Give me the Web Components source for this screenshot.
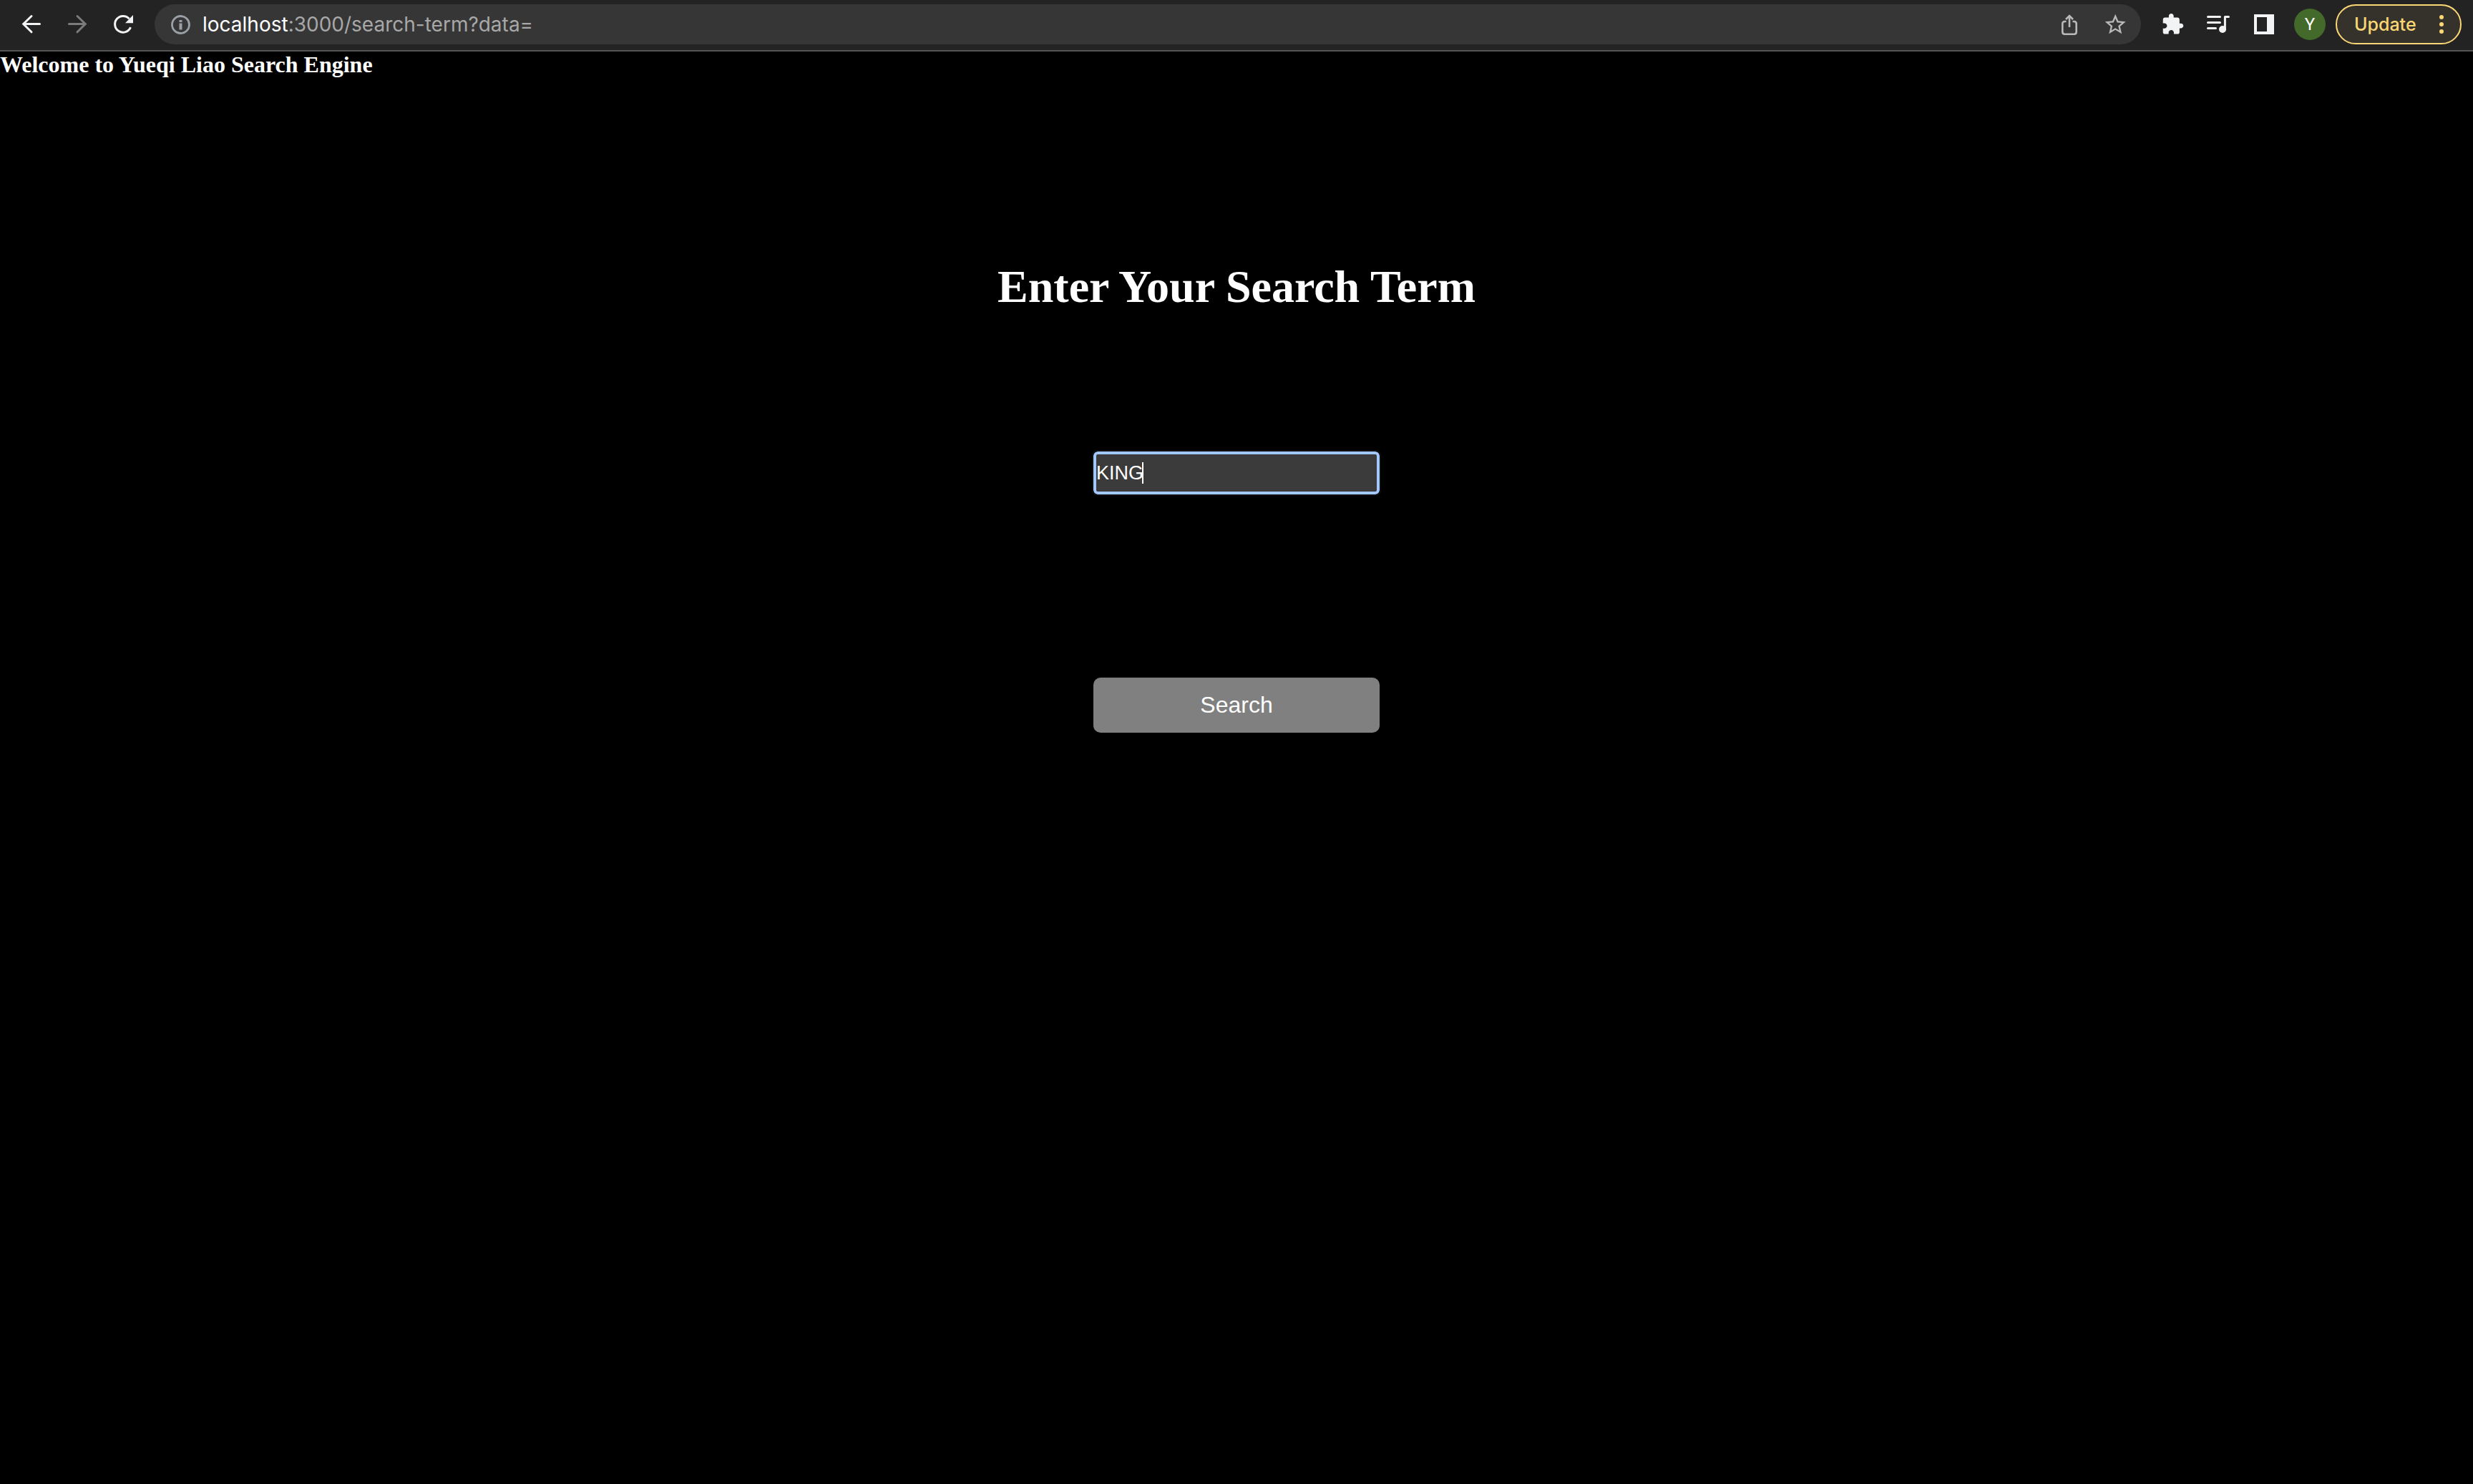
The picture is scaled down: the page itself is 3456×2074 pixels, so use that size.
<!DOCTYPE html>
<html lang="en">
<head>
<meta charset="utf-8">
<title>Search Term</title>
<style>
  body { margin: 0; background: #000; color: #fff; font-family: "Liberation Serif", "Times New Roman", serif; }
</style>
</head>
<body>
<browser-toolbar></browser-toolbar>
<search-page>
  <span slot="welcome">Welcome to Yueqi Liao Search Engine</span>
  <span slot="title">Enter Your Search Term</span>
</search-page>

<template id="toolbar-template">
  <style>
    :host { display: flex; align-items: center; gap: 8px; box-sizing: border-box; height: 72px; padding: 6px 16px 8px; background: #232323; border-bottom: 2px solid #545454; font-family: Inter, "Open Sans", sans-serif; color: #f1f3f4; }
    .address { flex: 1; display: flex; align-items: center; gap: 8px; height: 56px; margin: 0 8px; padding: 0 8px 0 22px; border-radius: 28px; background: #363636; box-sizing: border-box; }
    .url { flex: 1; padding-left: 8px; font-size: 28px; line-height: 56px; color: #a8a8a8; white-space: nowrap; }
    .url b { font-weight: 400; color: #fff; }
    .avatar-slot { display: flex; justify-content: center; width: 56px; }
    .avatar { width: 44px; height: 44px; padding: 0; border: 0; border-radius: 50%; background: #43692b; color: #fff; font: 24px/44px Roboto, sans-serif; }
    .update { display: flex; align-items: center; justify-content: space-between; box-sizing: border-box; width: 176px; height: 56px; padding: 0 22px 0 24px; border: 2px solid #fbd775; border-radius: 28px; background: #35322b; color: #fbd775; font: 500 25px/52px Inter, sans-serif; }
    .update svg { display: block; }
  </style>
  <tool-button label="Back"><svg width="56" height="56" fill="none" stroke="#f1f3f4" stroke-width="3" stroke-linecap="round"><path d="M39.500 27.500H17M28 16.500L16.700 27.500 28 38.800"/></svg></tool-button>
  <tool-button label="Forward"><svg width="56" height="56" fill="none" stroke="#7b7b7b" stroke-width="3" stroke-linecap="round"><path d="M16.500 27.500H39M28 16.500L39.300 27.500 28 38.800"/></svg></tool-button>
  <tool-button label="Reload"><svg width="56" height="56"><path d="M38.500 32.200A11.400 11.400 0 1 1 36.500 20.200" fill="none" stroke="#f1f3f4" stroke-width="3"/><path d="M42 15V26.300H31Z" fill="#f1f3f4"/></svg></tool-button>
  <div class="address">
    <svg width="29" height="29" viewBox="0 0 29 29"><circle cx="14.500" cy="14.500" r="12" fill="none" stroke="#9aa0a6" stroke-width="2.800"/><path d="M12.500 8h4v3h-4zM12.500 12.500h4v9h-4z" fill="#9aa0a6"/></svg>
    <div class="url"><b>localhost</b>:3000/search-term?data=</div>
    <tool-button label="Share"><svg width="56" height="56" fill="none" stroke="#b9b9b9" stroke-width="2.600"><path d="M23.500 24H21.500Q18.300 24 18.300 27.200V38.500Q18.300 41.700 21.500 41.700H34.500Q37.700 41.700 37.700 38.500V27.200Q37.700 24 34.500 24H32.500M28 32V16.500M23 21L28 16 33 21"/></svg></tool-button>
    <tool-button label="Bookmark"><svg width="56" height="56" fill="#b9b9b9"><path transform="translate(10.800 10.800) scale(1.450)" d="M22 9.240l-7.190-.620L12 2 9.190 8.630 2 9.240l5.460 4.730L5.820 21 12 17.270 18.180 21l-1.630-7.030L22 9.240zM12 15.400l-3.760 2.270 1-4.280-3.320-2.880 4.380-.380L12 6.100l1.710 4.040 4.380.380-3.320 2.880 1 4.280L12 15.400z"/></svg></tool-button>
  </div>
  <tool-button label="Extensions"><svg width="56" height="56" fill="#f1f3f4"><path transform="translate(12 11.700) scale(1.360)" d="M20.500 11H19V7c0-1.100-.9-2-2-2h-4V3.500C13 2.120 11.880 1 10.500 1S8 2.120 8 3.500V5H4c-1.100 0-1.990.9-1.990 2v3.800H3.500c1.490 0 2.700 1.210 2.700 2.700s-1.210 2.700-2.700 2.700H2V20c0 1.100.9 2 2 2h3.800v-1.500c0-1.490 1.210-2.700 2.700-2.700 1.490 0 2.700 1.210 2.700 2.700V22H17c1.100 0 2-.9 2-2v-4h1.500c1.380 0 2.500-1.120 2.500-2.500S21.880 11 20.500 11z"/></svg></tool-button>
  <tool-button label="Media controls"><svg width="56" height="56" fill="#f1f3f4"><path d="M13.500 17.500H30.500M13.500 25.500H30.500M13.500 33.500H24.500" stroke="#f1f3f4" stroke-width="3" stroke-linecap="round"/><path d="M37.400 35V17.500H42.500" fill="none" stroke="#f1f3f4" stroke-width="3" stroke-linecap="round" stroke-linejoin="round"/><circle cx="34" cy="35" r="5"/></svg></tool-button>
  <tool-button label="Side panel"><svg width="56" height="56"><path fill="#f1f3f4" fill-rule="evenodd" d="M14 14H42V42H14ZM18 18V38H32V18Z"/></svg></tool-button>
  <div class="avatar-slot"><button class="avatar" type="button">Y</button></div>
  <button class="update" type="button"><span>Update</span><svg width="8" height="28" fill="#fbd775"><circle cx="4" cy="4" r="3"/><circle cx="4" cy="14" r="3"/><circle cx="4" cy="24" r="3"/></svg></button>
</template>

<template id="tool-button-template">
  <style>
    :host { display: block; flex: none; }
    button { display: block; width: 56px; height: 56px; padding: 0; border: 0; background: none; }
    ::slotted(svg) { display: block; }
  </style>
  <button type="button"><slot></slot></button>
</template>

<template id="page-template">
  <style>
    :host { display: block; }
    h1, h2 { margin: 0; font-weight: 700; }
    h2 { font-size: 32px; line-height: 36px; }
    main { display: flex; flex-direction: column; align-items: center; padding-top: 256px; }
    h1 { font-size: 64px; line-height: 74px; text-align: center; }
    search-form { margin-top: 193px; }
  </style>
  <h2><slot name="welcome"></slot></h2>
  <main>
    <h1 id="title"><slot name="title"></slot></h1>
    <search-form></search-form>
  </main>
</template>

<template id="form-template">
  <style>
    :host { display: block; width: 400px; font-family: "Liberation Sans", Arial, sans-serif; }
    form { display: flex; flex-direction: column; gap: 256px; margin: 0; }
    .field { position: relative; display: flex; }
    input { box-sizing: border-box; width: 100%; height: 60px; padding: 0; border: 4px solid #a3c8ff; border-radius: 6px; outline: 2px solid #101010; background: #3b3b3b; color: #fff; caret-color: transparent; font: 27px/52px "Liberation Sans", Arial, sans-serif; }
    .caret { position: absolute; left: 68px; top: 15px; width: 2px; height: 30px; background: #fff; }
    button { height: 77px; padding: 0 0 2px; border: 0; border-radius: 10px; background: #808080; color: #fff; font: 32px/74px "Liberation Sans", Arial, sans-serif; }
  </style>
  <form>
    <div class="field">
      <input type="text" name="data" value="KING" aria-label="Search term" autocomplete="off" spellcheck="false">
      <span class="caret"></span>
    </div>
    <button type="submit">Search</button>
  </form>
</template>

<script>
  class TemplateElement extends HTMLElement {
    constructor() {
      super();
      const template = document.getElementById(this.constructor.template);
      this.attachShadow({ mode: "open" }).append(template.content.cloneNode(true));
    }
  }
  class ToolButton extends TemplateElement {
    static template = "tool-button-template";
    connectedCallback() {
      this.shadowRoot.querySelector("button").setAttribute("aria-label", this.getAttribute("label"));
    }
  }
  class SearchForm extends TemplateElement { static template = "form-template"; }
  class SearchPage extends TemplateElement { static template = "page-template"; }
  class BrowserToolbar extends TemplateElement { static template = "toolbar-template"; }
  customElements.define("tool-button", ToolButton);
  customElements.define("search-form", SearchForm);
  customElements.define("search-page", SearchPage);
  customElements.define("browser-toolbar", BrowserToolbar);
</script>
</body>
</html>
